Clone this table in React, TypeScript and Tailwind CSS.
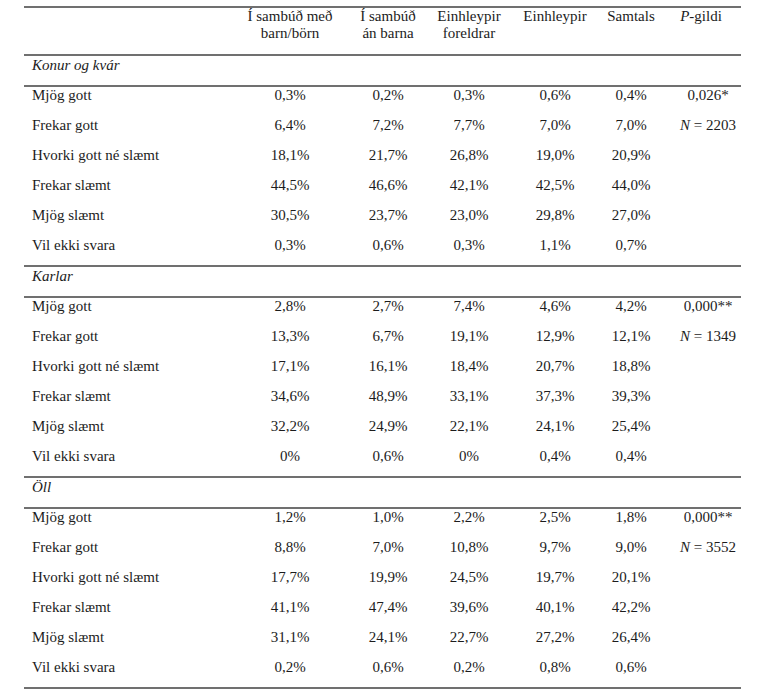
const cols = "grid grid-cols-[201px_130px_66px_96px_76px_76px_72px]";

type Section = {
  title: string;
  rows: { label: string; values: string[] }[];
  p: string;
  n: string;
};

const labels = [
  "Mjög gott",
  "Frekar gott",
  "Hvorki gott né slæmt",
  "Frekar slæmt",
  "Mjög slæmt",
  "Vil ekki svara",
];

function mk(title: string, data: string[][], p: string, n: string): Section {
  return { title, p, n, rows: labels.map((label, i) => ({ label, values: data[i] })) };
}

const sections: Section[] = [
  mk(
    "Konur og kvár",
    [
      ["0,3%", "0,2%", "0,3%", "0,6%", "0,4%"],
      ["6,4%", "7,2%", "7,7%", "7,0%", "7,0%"],
      ["18,1%", "21,7%", "26,8%", "19,0%", "20,9%"],
      ["44,5%", "46,6%", "42,1%", "42,5%", "44,0%"],
      ["30,5%", "23,7%", "23,0%", "29,8%", "27,0%"],
      ["0,3%", "0,6%", "0,3%", "1,1%", "0,7%"],
    ],
    "0,026*",
    "2203",
  ),
  mk(
    "Karlar",
    [
      ["2,8%", "2,7%", "7,4%", "4,6%", "4,2%"],
      ["13,3%", "6,7%", "19,1%", "12,9%", "12,1%"],
      ["17,1%", "16,1%", "18,4%", "20,7%", "18,8%"],
      ["34,6%", "48,9%", "33,1%", "37,3%", "39,3%"],
      ["32,2%", "24,9%", "22,1%", "24,1%", "25,4%"],
      ["0%", "0,6%", "0%", "0,4%", "0,4%"],
    ],
    "0,000**",
    "1349",
  ),
  mk(
    "Öll",
    [
      ["1,2%", "1,0%", "2,2%", "2,5%", "1,8%"],
      ["8,8%", "7,0%", "10,8%", "9,7%", "9,0%"],
      ["17,7%", "19,9%", "24,5%", "19,7%", "20,1%"],
      ["41,1%", "47,4%", "39,6%", "40,1%", "42,2%"],
      ["31,1%", "24,1%", "22,7%", "27,2%", "26,4%"],
      ["0,2%", "0,6%", "0,2%", "0,8%", "0,6%"],
    ],
    "0,000**",
    "3552",
  ),
];

function SectionBlock({ s }: { s: Section }) {
  return (
    <>
      <div className={`${cols} h-[31px] border-t-2 border-[#707070] pt-[1px]`}>
        <div className="pl-2 italic">{s.title}</div>
      </div>
      <div className="h-[180px] border-t-2 border-[#707070]">
        {s.rows.map((r, i) => (
          <div key={r.label} className={`${cols} ${i === 5 ? "h-[28px]" : "h-[30px]"}`}>
            <div className="pl-2">{r.label}</div>
            {r.values.map((v, j) => (
              <div key={j} className="text-center">
                {v}
              </div>
            ))}
            <div className="text-center pl-[6px]">
              {i === 0 && s.p}
              {i === 1 && (
                <>
                  <span className="italic">N</span> = {s.n}
                </>
              )}
            </div>
          </div>
        ))}
      </div>
    </>
  );
}

export default function App() {
  return (
    <div className="w-[768px] h-[696px] bg-white pt-[6px] pl-[24px] font-['Liberation_Serif'] text-[15px] leading-[17px] text-[#1c1c1c]">
      <div className="w-[717px]">
        <div className={`${cols} h-[48px] border-t-2 border-[#707070]`}>
          <div />
          <div className="text-center">
            Í sambúð með
            <br />
            barn/börn
          </div>
          <div className="text-center">
            Í sambúð
            <br />
            án barna
          </div>
          <div className="text-center">
            Einhleypir
            <br />
            foreldrar
          </div>
          <div className="text-center">Einhleypir</div>
          <div className="text-center">Samtals</div>
          <div className="text-center pr-[8px]">
            <span className="italic">P</span>-gildi
          </div>
        </div>
        {sections.map((s) => (
          <SectionBlock key={s.title} s={s} />
        ))}
        <div className="border-t-2 border-[#707070]" />
      </div>
    </div>
  );
}
